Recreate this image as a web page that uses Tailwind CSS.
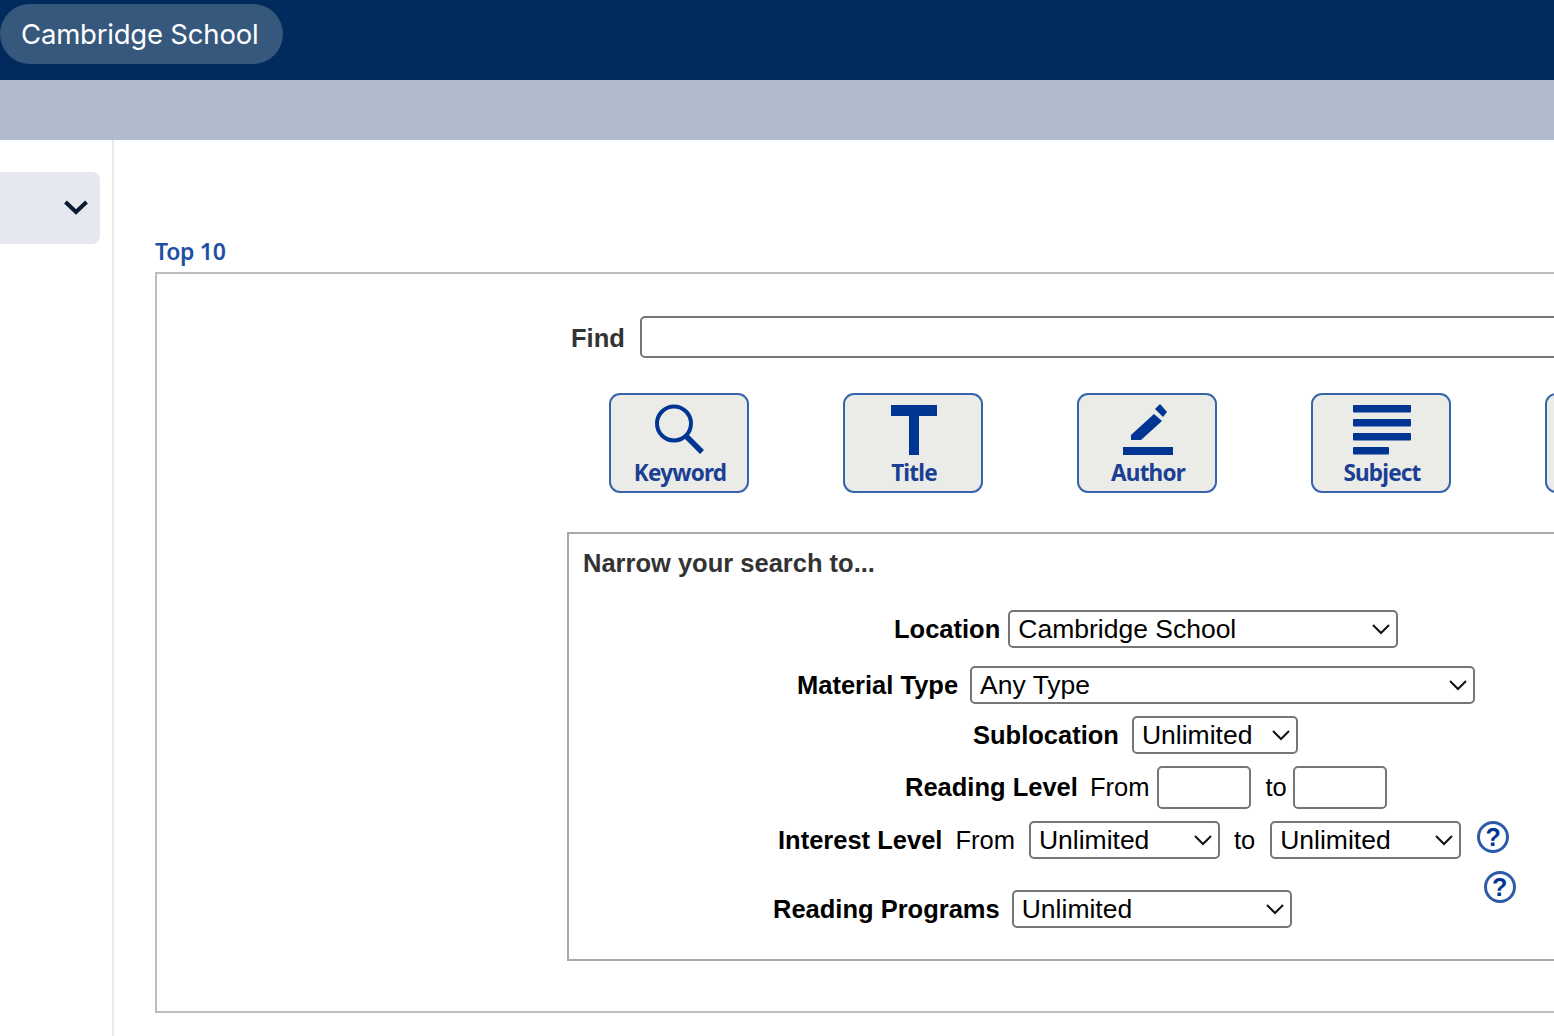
<!DOCTYPE html>
<html lang="en">
<head>
    <meta charset="UTF-8">
    <title>Cambridge School</title>
    <script src="https://cdn.jsdelivr.net/npm/@tailwindcss/browser@4"></script>
</head>
<body class="bg-white h-[1036px] overflow-hidden font-['Liberation_Sans',Arial,sans-serif]">
    <header class="h-20 bg-[#002b5c] pt-1">
        <div class="inline-flex items-center h-[60px] w-[283px] pl-[21px] pt-[2px] rounded-full bg-[#36587c] text-white text-[27.5px] font-['Inter',sans-serif] tracking-[-0.2px]">Cambridge School</div>
    </header>
    <div class="h-[60px] bg-[#b0bccd]"></div>

    <div class="flex h-[896px]">
        <aside class="w-[114px] shrink-0 border-r-2 border-[#e5e8ee] pt-8">
            <div class="flex items-center justify-end w-[100px] h-[72px] pr-[11px] pb-[2px] bg-[#e5e8ee] rounded-r-lg">
                <svg class="w-[26px] h-[26px] text-[#0b1a33]" viewBox="0 0 26 26" fill="none" stroke="currentColor" stroke-width="4"><path d="M2.500 8 L13 18 L23.500 8"/></svg>
            </div>
        </aside>

        <main class="pl-[41px]">
            <a href="#" class="block h-[32px] pt-[95px] box-content text-[23px] leading-[32px] font-semibold text-[#1f4fa3] font-['Noto_Sans',sans-serif] tracking-[-0.3px]">Top 10</a>
            <div class="w-[1500px] h-[741px] border-2 border-[#bdbdbd] mt-[5px] pl-[410px] pt-[42px]">
                <div class="flex items-center h-[42px]">
                    <label class="w-[73px] pl-1 pt-[2px] text-[25.500px] font-bold text-[#333]">Find</label>
                    <input type="text" class="w-[1000px] h-[42px] border-2 border-[#767676] rounded-[5px]">
                </div>

                <div class="flex gap-[94px] mt-[35px] pl-[42px]">
                    <a href="#" class="flex flex-col items-center justify-between shrink-0 w-[140px] h-[100px] border-2 border-[#3764ab] rounded-[11px] bg-[#ebece7] pl-[2px] pt-[9px] pb-[3px] text-[22.5px] leading-[30px] font-bold text-[#1a3f94] font-['Noto_Sans',sans-serif] tracking-[-0.8px]">
                        <svg class="w-[52px] h-[52px] shrink-0" viewBox="0 0 52 52" fill="none" stroke="#003594"><circle cx="20" cy="19.500" r="17" stroke-width="4"/><path d="M32 32 L48 48" stroke-width="5.500"/></svg>
                        Keyword
                    </a>
                    <a href="#" class="flex flex-col items-center justify-between shrink-0 w-[140px] h-[100px] border-2 border-[#3764ab] rounded-[11px] bg-[#ebece7] pl-[2px] pt-[10px] pb-[3px] text-[22.5px] leading-[30px] font-bold text-[#1a3f94] font-['Noto_Sans',sans-serif] tracking-[-0.8px]">
                        <svg class="w-[46px] h-[50px] shrink-0" viewBox="0 0 46 50" fill="#003594"><path d="M0 0 H46 V11 H28 V50 H18 V11 H0 Z"/></svg>
                        Title
                    </a>
                    <a href="#" class="flex flex-col items-center justify-between shrink-0 w-[140px] h-[100px] border-2 border-[#3764ab] rounded-[11px] bg-[#ebece7] pl-[2px] pt-[9px] pb-[3px] text-[22.5px] leading-[30px] font-bold text-[#1a3f94] font-['Noto_Sans',sans-serif] tracking-[-0.8px]">
                        <svg class="w-[52px] h-[52px] shrink-0" viewBox="0 0 52 52" fill="#003594"><path d="M1 43 H51 V51 H1 Z"/><path d="M9 36 V31 L32 10 L40 17 L19 36 Z"/><path d="M33 5 L38 0 L45 8 L41 13 Z"/></svg>
                        Author
                    </a>
                    <a href="#" class="flex flex-col items-center justify-between shrink-0 w-[140px] h-[100px] border-2 border-[#3764ab] rounded-[11px] bg-[#ebece7] pl-[2px] pt-[10px] pb-[3px] text-[22.5px] leading-[30px] font-bold text-[#1a3f94] font-['Noto_Sans',sans-serif] tracking-[-0.8px]">
                        <svg class="w-[58px] h-[50px] shrink-0" viewBox="0 0 58 50" fill="#003594"><rect width="58" height="7.500" rx="1"/><rect y="14" width="58" height="7.500" rx="1"/><rect y="28" width="58" height="7.500" rx="1"/><rect y="42" width="36" height="7.500" rx="1"/></svg>
                        Subject
                    </a>
                    <a href="#" class="shrink-0 w-[140px] h-[100px] border-2 border-[#3764ab] rounded-[11px] bg-[#ebece7]"></a>
                </div>

                <fieldset class="w-[1060px] h-[429px] mt-[39px] border-2 border-[#a9a9a9] pl-[14px] pt-[13px] text-[25.500px] text-black">
                    <h2 class="h-[32px] leading-[32px] font-bold text-[#333]">Narrow your search to...</h2>

                    <div class="flex items-center h-[38px] mt-[31px] pl-[311px]">
                        <label class="font-bold mr-[8px]">Location</label>
                        <div class="relative">
                            <select class="appearance-none block w-[390px] h-[38px] pl-[8px] text-[26.500px] leading-[30px] border-2 border-[#767676] rounded-[5px] bg-white"><option>Cambridge School</option></select>
                            <svg class="absolute right-[7px] top-[12px] w-[20px] h-[14px] pointer-events-none" viewBox="0 0 20 14" fill="none" stroke="#111" stroke-width="2"><path d="M2 3 L10 11 L18 3"/></svg>
                        </div>
                    </div>

                    <div class="flex items-center h-[38px] mt-[18px] pl-[214px]">
                        <label class="font-bold mr-[12px]">Material Type</label>
                        <div class="relative">
                            <select class="appearance-none block w-[505px] h-[38px] pl-[8px] text-[26.500px] leading-[30px] border-2 border-[#767676] rounded-[5px] bg-white"><option>Any Type</option></select>
                            <svg class="absolute right-[7px] top-[12px] w-[20px] h-[14px] pointer-events-none" viewBox="0 0 20 14" fill="none" stroke="#111" stroke-width="2"><path d="M2 3 L10 11 L18 3"/></svg>
                        </div>
                    </div>

                    <div class="flex items-center h-[38px] mt-[12px] pl-[390px]">
                        <label class="font-bold mr-[13px]">Sublocation</label>
                        <div class="relative">
                            <select class="appearance-none block w-[166px] h-[38px] pl-[8px] text-[26.500px] leading-[30px] border-2 border-[#767676] rounded-[5px] bg-white"><option>Unlimited</option></select>
                            <svg class="absolute right-[7px] top-[12px] w-[20px] h-[14px] pointer-events-none" viewBox="0 0 20 14" fill="none" stroke="#111" stroke-width="2"><path d="M2 3 L10 11 L18 3"/></svg>
                        </div>
                    </div>

                    <div class="flex items-center h-[43px] mt-[12px] pl-[322px]">
                        <label class="font-bold mr-[12px]">Reading Level</label>
                        <span class="mr-[8px]">From</span>
                        <input type="text" class="w-[94px] h-[43px] border-2 border-[#767676] rounded-[5px]">
                        <span class="ml-[14px] mr-[6px]">to</span>
                        <input type="text" class="w-[94px] h-[43px] border-2 border-[#767676] rounded-[5px]">
                    </div>

                    <div class="flex items-center h-[38px] mt-[12px] pl-[195px]">
                        <label class="font-bold mr-[13px]">Interest Level</label>
                        <span class="mr-[14px]">From</span>
                        <div class="relative">
                            <select class="appearance-none block w-[191px] h-[38px] pl-[8px] text-[26.500px] leading-[30px] border-2 border-[#767676] rounded-[5px] bg-white"><option>Unlimited</option></select>
                            <svg class="absolute right-[7px] top-[12px] w-[20px] h-[14px] pointer-events-none" viewBox="0 0 20 14" fill="none" stroke="#111" stroke-width="2"><path d="M2 3 L10 11 L18 3"/></svg>
                        </div>
                        <span class="ml-[14px] mr-[15px]">to</span>
                        <div class="relative">
                            <select class="appearance-none block w-[191px] h-[38px] pl-[8px] text-[26.500px] leading-[30px] border-2 border-[#767676] rounded-[5px] bg-white"><option>Unlimited</option></select>
                            <svg class="absolute right-[7px] top-[12px] w-[20px] h-[14px] pointer-events-none" viewBox="0 0 20 14" fill="none" stroke="#111" stroke-width="2"><path d="M2 3 L10 11 L18 3"/></svg>
                        </div>
                        <span class="flex items-center justify-center w-[32px] h-[32px] ml-[16px] -mt-[6px] rounded-full border-[3px] border-[#2e5aa8] text-[25px] leading-none font-bold text-[#003594]">?</span>
                    </div>

                    <div class="flex items-center h-[38px] mt-[31px] pl-[190px]">
                        <label class="font-bold mr-[12px]">Reading Programs</label>
                        <div class="relative">
                            <select class="appearance-none block w-[280px] h-[38px] pl-[8px] text-[26.500px] leading-[30px] border-2 border-[#767676] rounded-[5px] bg-white"><option>Unlimited</option></select>
                            <svg class="absolute right-[7px] top-[12px] w-[20px] h-[14px] pointer-events-none" viewBox="0 0 20 14" fill="none" stroke="#111" stroke-width="2"><path d="M2 3 L10 11 L18 3"/></svg>
                        </div>
                        <span class="flex items-center justify-center w-[32px] h-[32px] ml-[192px] -mt-[44px] rounded-full border-[3px] border-[#2e5aa8] text-[25px] leading-none font-bold text-[#003594]">?</span>
                    </div>
                </fieldset>
            </div>
        </main>
    </div>
</body>
</html>
